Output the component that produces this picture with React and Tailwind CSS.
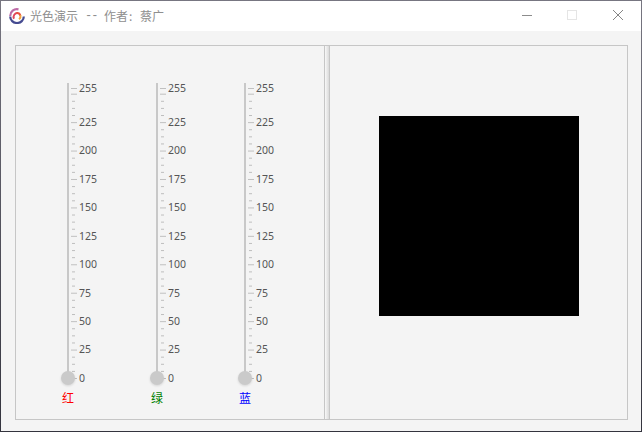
const MAJOR = [0, 25, 50, 75, 100, 125, 150, 175, 200, 225, 250];
const LABELS = [0, 25, 50, 75, 100, 125, 150, 175, 200, 225, 255];
const MINOR = Array.from({ length: 41 }, (_, i) => i * 6.25).filter((v) => v % 25 !== 0);

const toY = (value) => 295.5 - (value * 290) / 255;

function Slider({ name, className }) {
  return (
    <div className="flex w-[44px] flex-col">
      <svg width="44" height="306" viewBox="0 0 44 306" className="block overflow-visible">
        {MINOR.map((v) => (
          <rect key={v} x="11" y={toY(v) - 0.5} width="3" height="1" fill="#bebebe" />
        ))}
        {[...MAJOR, 255].map((v) => (
          <rect key={v} x="10" y={toY(v) - 0.5} width="6" height="1" fill="#c0c0c0" />
        ))}
        {LABELS.map((v) => (
          <text
            key={v}
            x="18"
            y={Math.round(toY(v) + 3.4)}
            fontSize="11"
            fill="#555555"
            textLength={v > 99 ? 18 : v > 9 ? 12 : 6}
            lengthAdjust="spacingAndGlyphs"
            className="font-['Noto_Sans',sans-serif]"
          >
            {v}
          </text>
        ))}
        <rect x="6" y="0" width="2" height="296" fill="#c8c8c8" />
        <circle cx="7" cy="295" r="7" fill="#cacaca" className="drop-shadow-[0_1px_1px_rgba(0,0,0,0.12)]" />
      </svg>
      <span className={`ml-px mt-px h-4 text-[12px] leading-4 ${className}`}>{name}</span>
    </div>
  );
}

function Logo() {
  return (
    <svg width="16" height="16" viewBox="0 0 16 16" fill="none" className="block">
      <path d="M9.5 1.4C5 .4 1.2 3.6 1.2 8" stroke="#bd6aa6" strokeWidth="2.2" />
      <path d="M1.2 8.5a6.8 6.5 0 0 0 13.6 0" stroke="#454b91" strokeWidth="2.2" />
      <path d="M5 10.8A4 4 0 0 1 9 5" stroke="#e0475b" strokeWidth="2" />
      <path d="M7.5 5.1a3.6 3.6 0 0 1 3.9 2.7" stroke="#e9513f" strokeWidth="2" />
      <path d="M11.4 7.3a4 4 0 0 1-1.3 4" stroke="#f1a33d" strokeWidth="2" />
    </svg>
  );
}

export default function App() {
  return (
    <div className="h-[432px] w-[642px] bg-linear-to-b from-[#777681] to-[#34343e] p-px font-['Noto_Sans_CJK_SC',sans-serif]">
      <div className="flex h-[430px] w-[640px] flex-col bg-[#f4f4f4]">
        <header className="flex h-[30px] shrink-0 items-center bg-white pl-2">
          <Logo />
          <h1 className="ml-[5px] flex whitespace-pre text-[12px] leading-4 text-[#8f8f8f]">
            <span className="w-12">光色演示</span>
            <span className="w-[26px] pl-[7px] font-['Liberation_Mono',monospace] tracking-[-1px]">--</span>
            <span>作者</span>
            <span className="w-3 pl-px">:</span>
            <span>蔡广</span>
          </h1>
          <svg width="120" height="30" viewBox="0 0 120 30" fill="none" className="ml-auto block">
            <path d="M1 14.5h10" stroke="#8c8c8c" />
            <rect x="46.5" y="9.5" width="9" height="9" stroke="#e5e5e5" />
            <path d="M92 9l10 10M102 9l-10 10" stroke="#858585" />
          </svg>
        </header>
        <main className="ml-[14px] mt-[14px] flex h-[375px] w-[613px] border border-[#c6c6c6]">
          <section className="flex w-[308px] pl-[45px] pt-[37px]">
            <Slider name="红" className="text-[#ff0000]" />
            <div className="w-[45px]" />
            <Slider name="绿" className="text-[#008000]" />
            <div className="w-[44px]" />
            <Slider name="蓝" className="text-[#0000ff]" />
          </section>
          <div className="w-[6px] border-x border-[#c6c6c6] bg-linear-to-r from-[#f8f8f8] to-[#dadada]" />
          <section className="flex-1 pl-[49px] pt-[70px]">
            <div className="size-[200px] bg-black" />
          </section>
        </main>
      </div>
    </div>
  );
}
